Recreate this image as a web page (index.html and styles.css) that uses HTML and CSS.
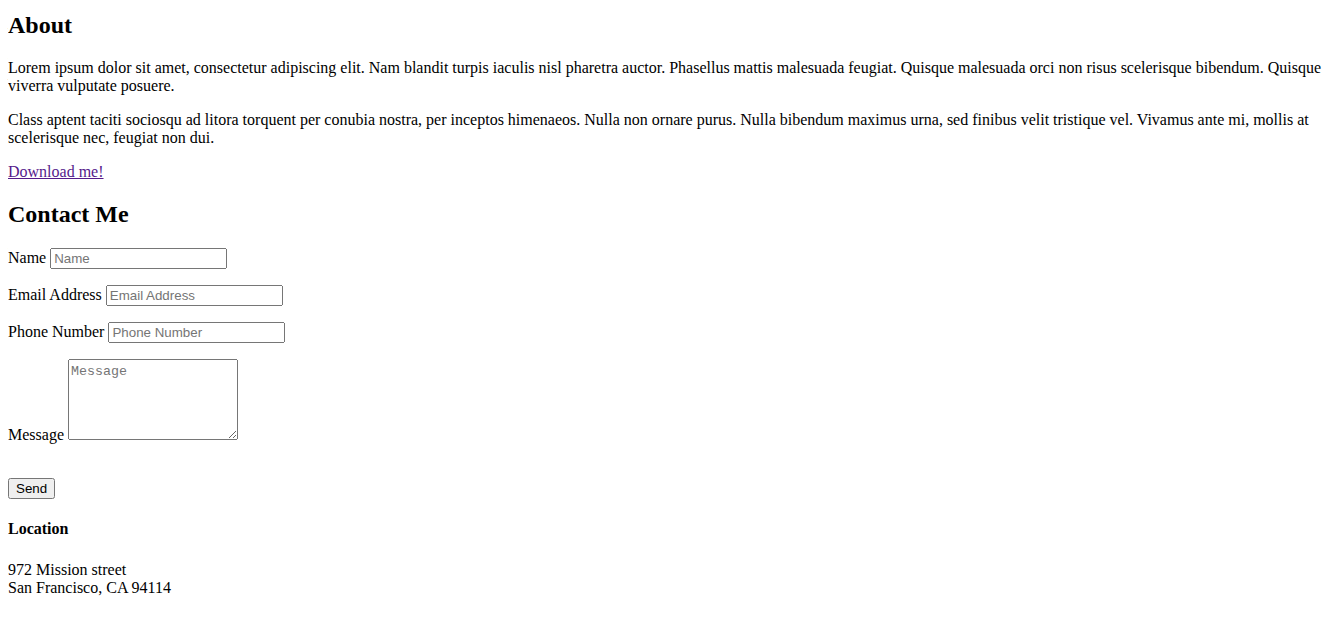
FILE: index.html
```html
<!DOCTYPE html>
<html>
<head>
<meta charset="utf-8">
<link rel="stylesheet" href="styles.css">
</head>
<body class="page">
<section class="about">
<h2 class="about-title">About</h2>
<p>Lorem ipsum dolor sit amet, consectetur adipiscing elit. Nam blandit turpis iaculis nisl pharetra auctor. Phasellus mattis malesuada feugiat. Quisque malesuada orci non risus scelerisque bibendum. Quisque viverra vulputate posuere.</p>
<p>Class aptent taciti sociosqu ad litora torquent per conubia nostra, per inceptos himenaeos. Nulla non ornare purus. Nulla bibendum maximus urna, sed finibus velit tristique vel. Vivamus ante mi, mollis at scelerisque nec, feugiat non dui.</p>
<p><a class="download" href="#">Download me!</a></p>
</section>
<section class="contact">
<h2>Contact Me</h2>
<form class="contact-form">
<p><label>Name</label> <input type="text" placeholder="Name"></p>
<p><label>Email Address</label> <input type="email" placeholder="Email Address"></p>
<p><label>Phone Number</label> <input type="tel" placeholder="Phone Number"></p>
<p><label>Message</label> <textarea placeholder="Message"></textarea></p>
<p><br><button type="button">Send</button></p>
</form>
<h4 class="location-title">Location</h4>
<p>972 Mission street<br>San Francisco, CA 94114</p>
</section>
</body>
</html>
```
FILE: styles.css
```css
.page {
  margin: 8px;
  font-family: "Liberation Serif", "Times New Roman", serif;
  font-size: 16px;
  color: #000;
  background: #fff;
}
.about-title {
  margin-top: 4px;
}
.download {
  color: #551a8b;
}
.contact-form input {
  box-sizing: border-box;
  width: 177px;
  height: 21px;
  font-family: "Liberation Sans", Arial, sans-serif;
  font-size: 13.33px;
}
.contact-form textarea {
  box-sizing: border-box;
  width: 170px;
  height: 81px;
  padding-top: 4px;
  font-family: "Liberation Mono", "Courier New", monospace;
  font-size: 13.33px;
}
.contact-form button {
  font-family: "Liberation Sans", Arial, sans-serif;
  font-size: 13.33px;
}
.location-title {
  margin-bottom: 23px;
}
```
